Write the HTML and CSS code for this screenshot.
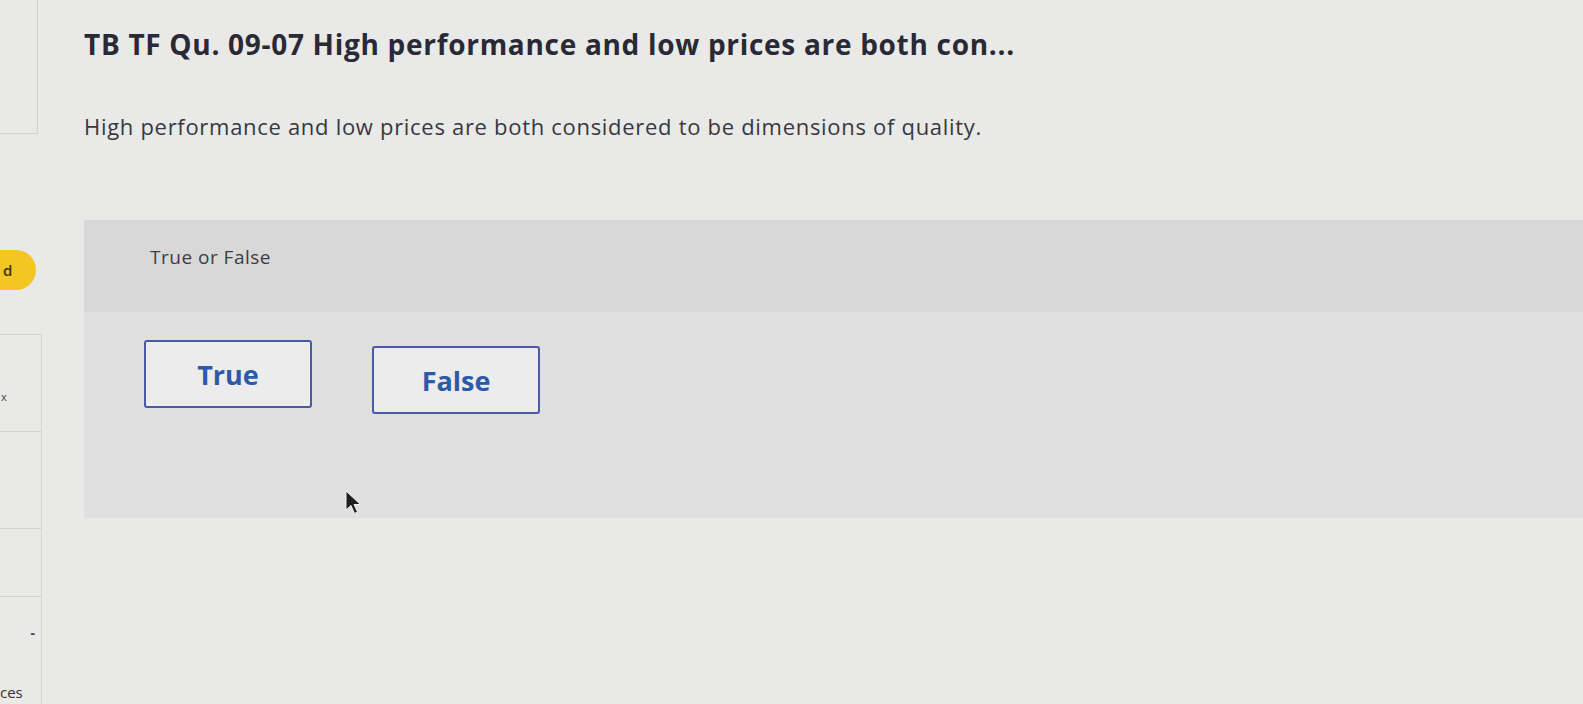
FILE: index.html
```html
<!DOCTYPE html>
<html lang="en">
<head>
    <meta charset="UTF-8">
    <title>TB TF Qu. 09-07</title>
    <link rel="stylesheet" href="styles.css">
</head>
<body>
    <!-- left nav strip -->
    <aside class="side">
        <div class="side-box side-top"></div>
        <div class="side-badge">d</div>
        <div class="side-list">
            <div class="side-row"><span class="side-mark">x</span></div>
            <div class="side-row"></div>
            <div class="side-row short"></div>
            <div class="side-row last"><span class="side-dash">-</span><span class="side-label">ces</span></div>
        </div>
    </aside>

    <!-- question -->
    <main class="question">
        <h1 class="q-title">TB TF Qu. 09-07 High performance and low prices are both con...</h1>
        <p class="q-text">High performance and low prices are both considered to be dimensions of quality.</p>

        <section class="answer-panel">
            <div class="answer-head">True or False</div>
            <div class="answer-body">
                <button class="choice">True</button>
                <button class="choice">False</button>
            </div>
        </section>
    </main>

    <svg class="cursor" width="18" height="26" viewBox="0 0 18 26">
        <path d="M2 1 L2 20 L7 15.5 L10.5 23.5 L13.5 22 L10 14.5 L16.5 14.5 Z" fill="#1d1d22" stroke="#f2f2f2" stroke-width="1"/>
    </svg>
</body>
</html>
```

FILE: styles.css
```css
* {
    box-sizing: border-box;
    margin: 0;
    padding: 0;
}

body {
    font-family: "Open Sans", Lato, sans-serif;
    background: #e9e9e8;
    color: #2e2e38;
    display: flex;
    height: 100vh;
    overflow: hidden;
}

/* left strip */
.side {
    width: 42px;
    flex-shrink: 0;
    display: flex;
    flex-direction: column;
    overflow: hidden;
}

.side-box {
    border-right: 1px solid #d3d3d3;
    border-bottom: 1px solid #d3d3d3;
}

.side-top {
    height: 134px;
    width: 38px;
}

.side-badge {
    margin: 116px 0 0 -22px;
    width: 58px;
    height: 40px;
    border-radius: 20px;
    background: #f3c623;
    color: #3a3420;
    font-size: 15px;
    font-weight: 600;
    line-height: 40px;
    padding-left: 25px;
}

.side-list {
    margin-top: 44px;
    flex: 1;
    border-top: 1px solid #d3d3d3;
    border-right: 1px solid #d3d3d3;
    display: flex;
    flex-direction: column;
}

.side-row {
    height: 97px;
    border-bottom: 1px solid #d3d3d3;
    font-size: 14px;
    color: #444;
}

.side-row.short {
    height: 68px;
}

.side-row.last {
    flex: 1;
    border-bottom: none;
}

.side-mark {
    display: block;
    padding-top: 54px;
    margin-left: 1px;
    font-size: 11px;
}

.side-dash {
    display: block;
    text-align: right;
    padding: 26px 6px 0 0;
    font-weight: 700;
}

.side-label {
    display: block;
    margin-top: 40px;
    font-size: 15px;
    color: #333;
}

/* main question area */
.question {
    flex: 1;
    padding: 26px 0 0 42px;
}

.q-title {
    font-size: 28px;
    font-weight: 700;
    letter-spacing: 0.7px;
    color: #2a2a36;
    line-height: 36px;
}

.q-text {
    margin-top: 50px;
    font-size: 22px;
    letter-spacing: 0.7px;
    color: #38383f;
    line-height: 28px;
}

.answer-panel {
    margin-top: 80px;
    background: #e0e0e0;
    height: 298px;
}

.answer-head {
    background: #d8d8d8;
    height: 92px;
    padding: 24px 0 0 66px;
    font-size: 19px;
    letter-spacing: 0.5px;
    color: #3c3c44;
}

.answer-body {
    display: flex;
    gap: 60px;
    padding: 28px 0 0 60px;
}

.choice {
    width: 168px;
    height: 68px;
    background: #ececec;
    border: 2px solid #4a5aa6;
    border-radius: 3px;
    font-family: "Open Sans", Lato, sans-serif;
    font-size: 27px;
    font-weight: 700;
    color: #2d5aa8;
}

.choice:last-child {
    margin-top: 6px;
}

/* mouse pointer on top of the page */
.cursor {
    position: absolute;
    left: 344px;
    top: 490px;
}
```
